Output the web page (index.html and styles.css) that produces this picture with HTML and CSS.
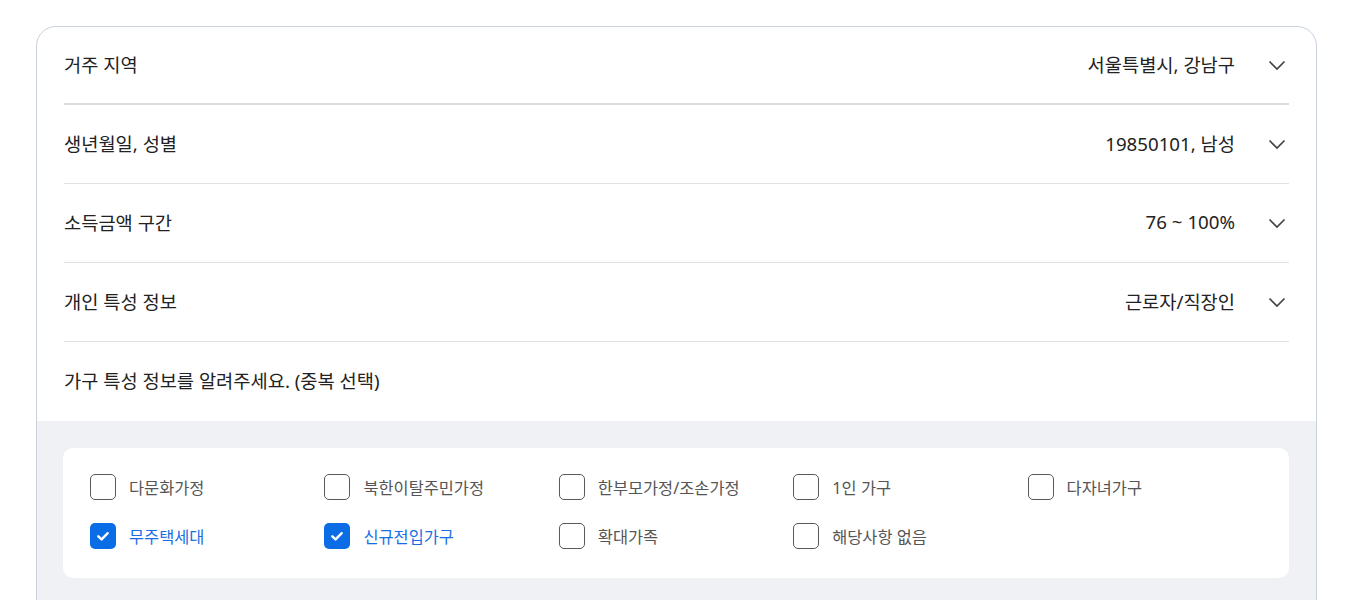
FILE: index.html
```html
<!DOCTYPE html>
<html lang="ko">
<head>
<meta charset="utf-8">
<link rel="stylesheet" href="styles.css">
</head>
<body>
<div class="page">
  <section class="card">
    <div class="rows">
      <div class="row row-first">
        <span class="label">거주 지역</span>
        <span class="value">서울특별시, 강남구</span>
        <svg class="chev" viewBox="0 0 24 24"><path d="M4.5 8.5 L12 16 L19.5 8.5"/></svg>
      </div>
      <div class="row">
        <span class="label">생년월일, 성별</span>
        <span class="value">19850101, 남성</span>
        <svg class="chev" viewBox="0 0 24 24"><path d="M4.5 8.5 L12 16 L19.5 8.5"/></svg>
      </div>
      <div class="row">
        <span class="label">소득금액 구간</span>
        <span class="value">76 ~ 100%</span>
        <svg class="chev" viewBox="0 0 24 24"><path d="M4.5 8.5 L12 16 L19.5 8.5"/></svg>
      </div>
      <div class="row">
        <span class="label">개인 특성 정보</span>
        <span class="value">근로자/직장인</span>
        <svg class="chev" viewBox="0 0 24 24"><path d="M4.5 8.5 L12 16 L19.5 8.5"/></svg>
      </div>
      <div class="row row-last">
        <span class="label">가구 특성 정보를 알려주세요. (중복 선택)</span>
      </div>
    </div>
    <div class="options-area">
      <div class="options">
        <label class="opt"><span class="box"></span><span class="txt">다문화가정</span></label>
        <label class="opt"><span class="box"></span><span class="txt">북한이탈주민가정</span></label>
        <label class="opt"><span class="box"></span><span class="txt">한부모가정/조손가정</span></label>
        <label class="opt"><span class="box"></span><span class="txt">1인 가구</span></label>
        <label class="opt"><span class="box"></span><span class="txt">다자녀가구</span></label>
        <label class="opt checked"><span class="box"><svg viewBox="0 0 26 26"><path d="M8.3 13.3 L11.6 16.4 L17.7 10.2"/></svg></span><span class="txt">무주택세대</span></label>
        <label class="opt checked"><span class="box"><svg viewBox="0 0 26 26"><path d="M8.3 13.3 L11.6 16.4 L17.7 10.2"/></svg></span><span class="txt">신규전입가구</span></label>
        <label class="opt"><span class="box"></span><span class="txt">확대가족</span></label>
        <label class="opt"><span class="box"></span><span class="txt">해당사항 없음</span></label>
      </div>
    </div>
  </section>
</div>
</body>
</html>
```
FILE: styles.css
```css
* { box-sizing: border-box; }
html, body { margin: 0; padding: 0; background: #fff; }
body {
  font-family: "Noto Sans", "Noto Sans CJK KR", sans-serif;
  color: #222;
  overflow: hidden;
  height: 600px;
}
.page {
  padding: 26px 34px 0 36px;
}
.card {
  border: 1px solid #c9d1de;
  border-radius: 20px;
  overflow: hidden;
  background: #fff;
}
.rows {
  padding: 0 27px 0 27px;
}
.row {
  display: flex;
  align-items: center;
  height: 79px;
  padding-bottom: 3px;
  border-bottom: 1px solid #e2e2e2;
  font-size: 18.7px;
}
.row-first {
  height: 78px;
  border-bottom: 2px solid #dcdcdc;
}
.row-last {
  border-bottom: none;
  padding-bottom: 4px;
}
.label { flex: 1; }
.value { margin-right: 30px; }
.chev {
  width: 24px;
  height: 24px;
  fill: none;
  stroke: #444;
  stroke-width: 1.7;
  margin-top: 3px;
}
.options-area {
  background: #f0f1f5;
  padding: 27px 27px 40px 26px;
}
.options {
  background: #fff;
  border-radius: 10px;
  padding: 26px 27px 29px 27px;
  display: grid;
  grid-template-columns: repeat(5, 1fr);
  row-gap: 23px;
}
.opt {
  display: flex;
  align-items: center;
  gap: 13px;
  font-size: 16.4px;
  color: #555;
}
.box {
  width: 26px;
  height: 26px;
  border: 1.5px solid #5a5a5a;
  border-radius: 5px;
  flex: none;
  display: flex;
}
.box svg {
  width: 100%;
  height: 100%;
  fill: none;
  stroke: #fff;
  stroke-width: 2.4;
  stroke-linecap: round;
  stroke-linejoin: round;
}
.checked .box {
  background: #0a6de6;
  border: none;
}
.checked .txt { color: #1a6ee4; }
```
